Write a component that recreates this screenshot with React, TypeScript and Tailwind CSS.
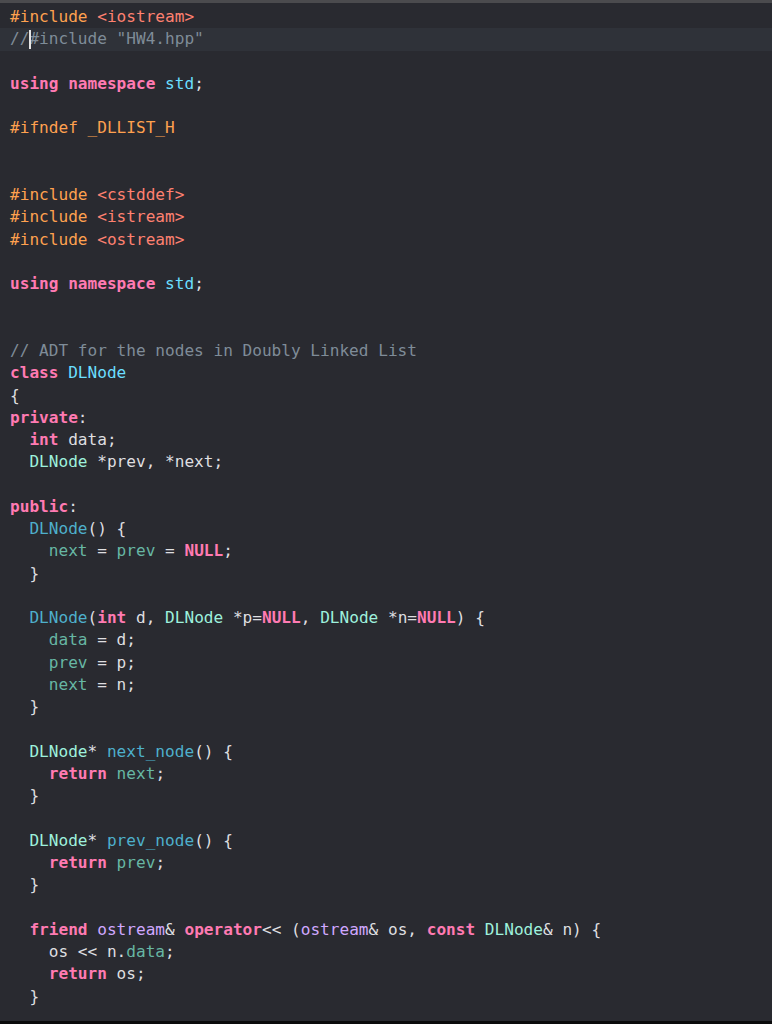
import React from "react";

const PP = "text-[#FFA14F]";
const ST = "text-[#FF8170]";
const KW = "text-[#FF7AB2] font-bold";
const CM = "text-[#7F8C98]";
const TD = "text-[#6BDFFF]";
const DC = "text-[#4EB0CC]";
const CL = "text-[#9EF1DD]";
const VR = "text-[#67B7A4]";
const OC = "text-[#D0A8FF]";
const PL = "";

type Tok = [string, string];

const lines: Tok[][] = [
  [[ "#include ", PP ], [ "<iostream>", ST ]],
  [], // line 2 special
  [],
  [[ "using", KW ], [ " ", PL ], [ "namespace", KW ], [ " ", PL ], [ "std", TD ], [ ";", PL ]],
  [],
  [[ "#ifndef _DLLIST_H", PP ]],
  [],
  [],
  [[ "#include ", PP ], [ "<cstddef>", ST ]],
  [[ "#include ", PP ], [ "<istream>", ST ]],
  [[ "#include ", PP ], [ "<ostream>", ST ]],
  [],
  [[ "using", KW ], [ " ", PL ], [ "namespace", KW ], [ " ", PL ], [ "std", TD ], [ ";", PL ]],
  [],
  [],
  [[ "// ADT for the nodes in Doubly Linked List", CM ]],
  [[ "class", KW ], [ " ", PL ], [ "DLNode", TD ]],
  [[ "{", PL ]],
  [[ "private", KW ], [ ":", PL ]],
  [[ "  ", PL ], [ "int", KW ], [ " data;", PL ]],
  [[ "  ", PL ], [ "DLNode", CL ], [ " *prev, *next;", PL ]],
  [],
  [[ "public", KW ], [ ":", PL ]],
  [[ "  ", PL ], [ "DLNode", DC ], [ "() {", PL ]],
  [[ "    ", PL ], [ "next", VR ], [ " = ", PL ], [ "prev", VR ], [ " = ", PL ], [ "NULL", KW ], [ ";", PL ]],
  [[ "  }", PL ]],
  [],
  [
    [ "  ", PL ], [ "DLNode", DC ], [ "(", PL ], [ "int", KW ], [ " d, ", PL ], [ "DLNode", CL ],
    [ " *p=", PL ], [ "NULL", KW ], [ ", ", PL ], [ "DLNode", CL ], [ " *n=", PL ], [ "NULL", KW ], [ ") {", PL ],
  ],
  [[ "    ", PL ], [ "data", VR ], [ " = d;", PL ]],
  [[ "    ", PL ], [ "prev", VR ], [ " = p;", PL ]],
  [[ "    ", PL ], [ "next", VR ], [ " = n;", PL ]],
  [[ "  }", PL ]],
  [],
  [[ "  ", PL ], [ "DLNode", CL ], [ "* ", PL ], [ "next_node", DC ], [ "() {", PL ]],
  [[ "    ", PL ], [ "return", KW ], [ " ", PL ], [ "next", VR ], [ ";", PL ]],
  [[ "  }", PL ]],
  [],
  [[ "  ", PL ], [ "DLNode", CL ], [ "* ", PL ], [ "prev_node", DC ], [ "() {", PL ]],
  [[ "    ", PL ], [ "return", KW ], [ " ", PL ], [ "prev", VR ], [ ";", PL ]],
  [[ "  }", PL ]],
  [],
  [
    [ "  ", PL ], [ "friend", KW ], [ " ", PL ], [ "ostream", OC ], [ "& ", PL ], [ "operator", KW ],
    [ "<< (", PL ], [ "ostream", OC ], [ "& os, ", PL ], [ "const", KW ], [ " ", PL ], [ "DLNode", CL ], [ "& n) {", PL ],
  ],
  [[ "    os << n.", PL ], [ "data", VR ], [ ";", PL ]],
  [[ "    ", PL ], [ "return", KW ], [ " os;", PL ]],
  [[ "  }", PL ]],
];

export default function App() {
  return (
    <div className="h-screen w-full flex flex-col bg-[#292A30] overflow-hidden">
      <div className="h-[3px] bg-[#4b4b4e] shrink-0" />
      <div
        className="flex-1 pt-[3px] text-[#DFDFE0] text-[16.1px] leading-[22.27px] whitespace-pre"
        style={{ fontFamily: '"DejaVu Sans Mono", "Liberation Mono", monospace' }}
      >
        {lines.map((toks, i) =>
          i === 1 ? (
            <div key={i} className="h-[22.27px] pl-[10px] bg-[#2F3239] flex items-center">
              <span className={CM}>//</span>
              <span className="inline-block w-[1.5px] h-[19px] bg-[#E6E6E6] -mr-[1.5px] relative" />
              <span className={CM}>#include "HW4.hpp"</span>
            </div>
          ) : (
            <div key={i} className="h-[22.27px] pl-[10px]">
              {toks.map(([t, c], j) => (
                <span key={j} className={c}>
                  {t}
                </span>
              ))}
            </div>
          )
        )}
      </div>
      <div className="h-[3px] bg-[#0b0b0c] shrink-0" />
    </div>
  );
}
